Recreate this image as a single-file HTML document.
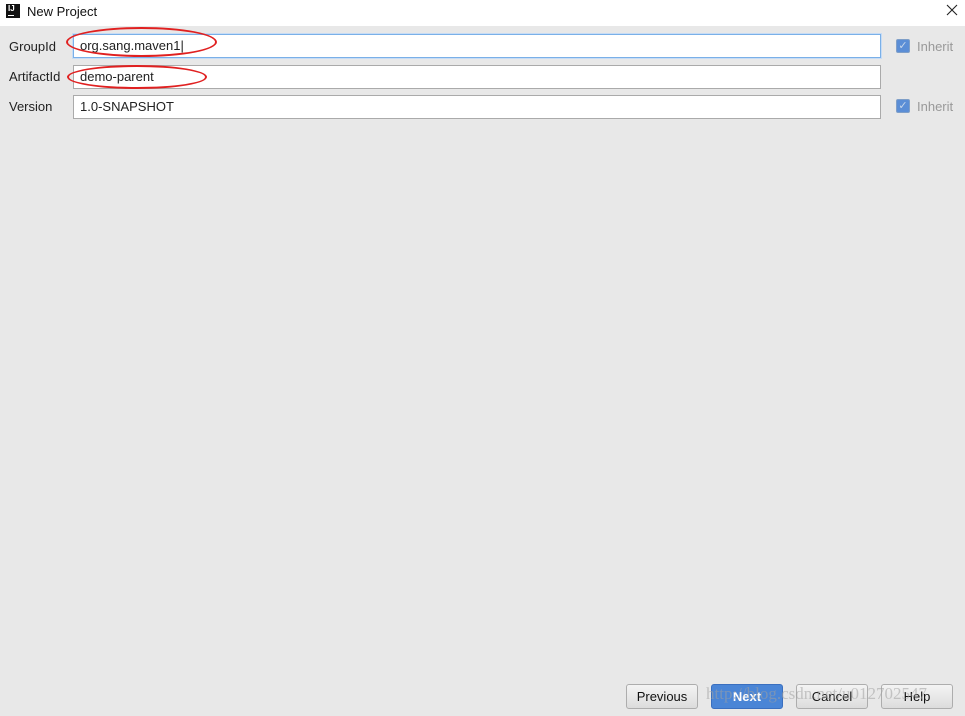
<!DOCTYPE html>
<html><head><meta charset="utf-8"><style>
*{box-sizing:border-box;margin:0;padding:0}
body{width:965px;height:716px;background:#e8e8e8;font-family:"Liberation Sans","Microsoft YaHei",sans-serif;font-size:13px;color:#222;position:relative;overflow:hidden}
.title{position:absolute;left:0;top:0;width:965px;height:26px;background:#fff}
.logo{position:absolute;left:6px;top:4px;width:14px;height:14px;background:#111;color:#fff;font-size:8px;font-weight:bold;line-height:9px;padding-left:2px}
.logo i{position:absolute;left:2px;bottom:2px;width:6px;height:1px;background:#fff}
.tt{position:absolute;left:27px;top:4px;font-size:13px;color:#111}
.x{position:absolute;left:946px;top:4px}
.lbl{position:absolute;left:9px}
.in{position:absolute;left:73px;width:808px;height:24px;background:#fff;border:1px solid #aaa;padding-left:6px;line-height:22px}
.in.f{border:1px solid #7ab0e8;box-shadow:0 0 0 1px #c7dcf5}
.cb{position:absolute;left:896px;width:14px;height:14px;background:#5b8ed6;border:1px solid #7f9fc8;border-radius:2px;color:#c7d6ea;font-size:11px;line-height:12px;text-align:center}
.inh{position:absolute;left:917px;color:#999}
.oval{position:absolute;border:2px solid #e02020;border-radius:50%}
.btn{position:absolute;top:684px;height:25px;width:72px;border:1px solid #adadad;border-radius:3px;background:linear-gradient(#f4f4f4,#dcdcdc);text-align:center;line-height:23px;color:#111}
.btn.n{background:#4a85d6;border-color:#3a6fbf;color:#fff;font-weight:bold}
.wm{position:absolute;left:706px;top:684px;font-family:"Liberation Serif",serif;font-size:17px;color:rgba(160,160,160,.55);white-space:nowrap}
</style></head><body>
<div class="title"><div class="logo">IJ<i></i></div><div class="tt">New Project</div>
<svg class="x" width="12" height="12" viewBox="0 0 12 12"><path d="M1 1L11 11M11 1L1 11" stroke="#222" stroke-width="1.1"/></svg></div>
<div class="lbl" style="top:39px">GroupId</div>
<div class="in f" style="top:34px">org.sang.maven1|</div>
<div class="cb" style="top:39px">✓</div><div class="inh" style="top:39px">Inherit</div>
<div class="lbl" style="top:69px">ArtifactId</div>
<div class="in" style="top:65px">demo-parent</div>
<div class="lbl" style="top:99px">Version</div>
<div class="in" style="top:95px">1.0-SNAPSHOT</div>
<div class="cb" style="top:99px">✓</div><div class="inh" style="top:99px">Inherit</div>
<div class="oval" style="left:66px;top:27px;width:151px;height:30px"></div>
<div class="oval" style="left:67px;top:65px;width:140px;height:24px"></div>
<div class="btn" style="left:626px">Previous</div>
<div class="btn n" style="left:711px">Next</div>
<div class="btn" style="left:796px">Cancel</div>
<div class="btn" style="left:881px">Help</div>
<div class="wm">http://blog.csdn.net/u012702547</div>
</body></html>
